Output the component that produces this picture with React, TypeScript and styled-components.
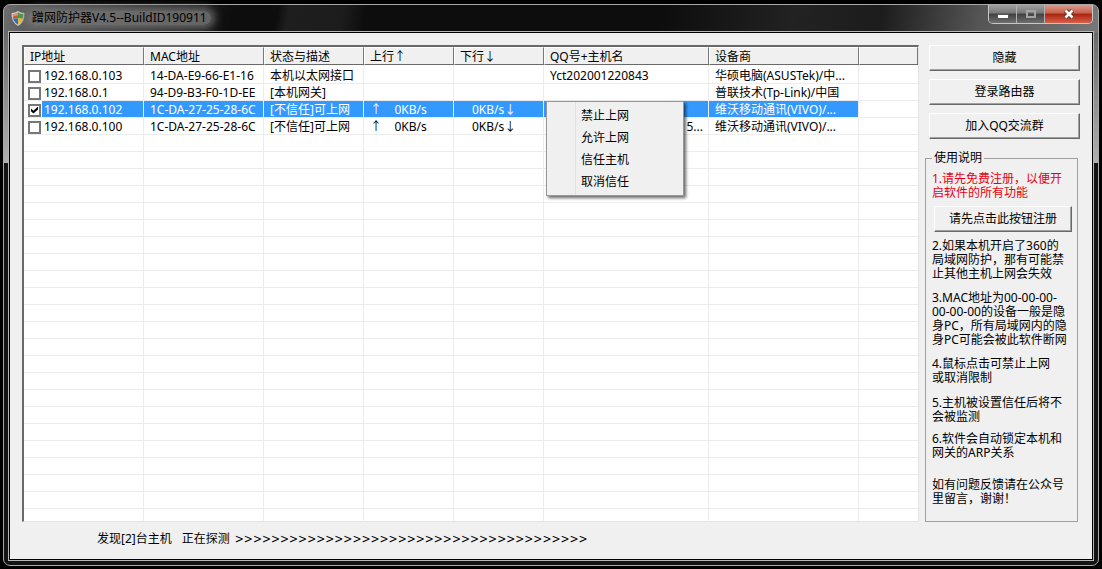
import React from "react";
import styled, { createGlobalStyle, css } from "styled-components";

const GlobalStyle = createGlobalStyle`
  * { box-sizing: border-box; }
  body {
    margin: 0;
    background: #000;
    color: #000;
    font: 12px/14px "Noto Sans", "Noto Sans CJK SC", sans-serif;
  }
  button, input { font: inherit; color: inherit; }
`;

const Frame = styled.main`
  display: flex;
  flex-direction: column;
  min-height: calc(100vh - 7px);
  margin: 4px 3px 3px;
  padding: 0 5px 5px;
  border: 1px solid #a8a8a8;
  border-radius: 7px;
  background:
    linear-gradient(#6a6a6a, #b0b0b0) 0 28px / 5px 130px no-repeat,
    linear-gradient(#6a6a6a, #b0b0b0) 100% 28px / 5px 130px no-repeat,
    linear-gradient(100deg, #6e6e6e 0, #555 3%, #222 16%, #0d0d0d 21%, #0d0d0d 25%, #1e1e1e 26%, #1c1c1c 31%, #0d0d0d 33%, #0d0d0d 60%, #222 72%, #1c1c1c 80%, #555 89%, #777 100%) 0 0 / 100% 28px no-repeat,
    #141414;
`;

const TitleBar = styled.header`
  display: flex;
  align-items: flex-start;
  height: 27px;
`;

const Title = styled.h1`
  display: flex;
  align-items: center;
  gap: 7px;
  flex: 1;
  height: 26px;
  margin: 0;
  font-size: 12px;
  font-weight: 400;

  svg { margin-left: 2px; }
  span {
    padding: 0 4px;
    margin: 0 -4px;
    border-radius: 8px;
    background: rgba(120, 120, 120, 0.8);
    box-shadow: 0 0 8px 4px rgba(120, 120, 120, 0.8);
  }
`;

const WindowButtons = styled.div`
  display: flex;
  border: 1px solid #c8c8c8;
  border-top: 0;
  border-radius: 0 0 5px 5px;
  overflow: hidden;
`;

const WindowButton = styled.button<{ $close?: boolean }>`
  display: grid;
  place-items: center;
  width: ${(p) => (p.$close ? 47 : 28)}px;
  height: 18px;
  padding: 0;
  border: 0;
  border-right: ${(p) => (p.$close ? "0" : "1px solid #b0b0b0")};
  background: ${(p) =>
    p.$close
      ? "linear-gradient(#dd9a8c, #c8604c 45%, #a82410 50%, #d8604a)"
      : "linear-gradient(#a0a0a0, #787878 45%, #404040 50%, #707070)"};
`;

const Client = styled.div`
  display: flex;
  flex-direction: column;
  flex: 1;
  padding: 12px;
  border: 1px solid #000;
  outline: 1px solid #b8b8b8;
  background: #f0f0f0;
`;

const Content = styled.div`
  display: grid;
  grid-template-columns: minmax(0, 1fr) 155px;
  gap: 6px;
  flex: 1;
`;

const ListView = styled.section`
  position: relative;
  contain: size;
  overflow: hidden;
  border: 1px solid #e3e3e3;
  border-width: 2px 1px 1px 2px;
  border-top-color: #696969;
  border-left-color: #696969;
  background: #fff;
`;

const HostTable = styled.table`
  width: 100%;
  table-layout: fixed;
  border-spacing: 0;
`;

const HeadCell = styled.th`
  height: 18px;
  padding: 2px 5px 0;
  border: 1px solid #fff;
  border-right-color: #777;
  border-bottom-color: #696969;
  background: #f0f0f0;
  font-weight: 400;
  text-align: left;
  white-space: nowrap;
`;

const Row = styled.tr<{ $selected?: boolean }>`
  ${(p) => p.$selected && css`
    color: #fff;
    background: #3399ff;
  `}
`;

const Cell = styled.td<{ $first?: boolean; $right?: boolean }>`
  height: 17px;
  padding: 2px 5px 0 6px;
  border-right: 1px solid #ececec;
  border-bottom: 1px solid #ececec;
  overflow: hidden;
  text-align: ${(p) => (p.$right ? "right" : "left")};
  text-overflow: ellipsis;
  white-space: pre;
  ${(p) => p.$first && css`
    padding: 2px 0 0 4px;
    background: linear-gradient(#fff, #fff) 0 0 / 18px 100% no-repeat;
  `}
  tbody tr:first-child & { height: 19px; padding-top: 4px; }
  &:last-child { background: #fff; border-right: 0; }
`;

const HostLabel = styled.label`
  display: flex;
  align-items: center;
  gap: 3px;
`;

const CheckBox = styled.input`
  appearance: none;
  display: grid;
  place-items: center;
  width: 13px;
  height: 13px;
  margin: 0;
  border: 2px solid #777;
  background: #fff;

  &:checked::before {
    content: "";
    width: 7px;
    height: 7px;
    background: #000;
    clip-path: polygon(0 28%, 35% 60%, 100% 0, 100% 42%, 35% 100%, 0 68%);
  }
`;

const Download = styled.span`
  padding-left: 12px;
`;

const Menu = styled.div`
  position: absolute;
  left: 522px;
  top: 54px;
  display: flex;
  flex-direction: column;
  width: 138px;
  padding: 3px 2px 2px;
  border: 1px solid #979797;
  background: linear-gradient(90deg, transparent 28px, #e2e2e2 28px, #e2e2e2 29px, transparent 29px), #f0f0f0;
  box-shadow: 2px 2px 3px rgba(0, 0, 0, 0.6);
`;

const MenuItem = styled.button`
  height: 22px;
  padding: 0 0 0 32px;
  border: 0;
  background: none;
  text-align: left;
`;

const Sidebar = styled.aside`
  display: flex;
  flex-direction: column;
`;

const PushButton = styled.button`
  height: 26px;
  padding: 0;
  border: 1px solid #fff;
  border-right-color: #696969;
  border-bottom-color: #696969;
  box-shadow: inset -1px -1px #a0a0a0;
  background: #f0f0f0;
`;

const Actions = styled.div`
  display: grid;
  gap: 8px;
  padding: 0 0 0 4px;
`;

const Help = styled.fieldset`
  display: flex;
  flex-direction: column;
  flex: 1;
  min-width: 0;
  margin: 12px 2px 0 0;
  padding: 7px 5px 6px 6px;
  border: 1px solid #a0a0a0;
  white-space: nowrap;

  legend { padding: 0 2px; }
  ${PushButton} { margin: 6px 0 0 2px; }
`;

const Note = styled.p<{ $red?: boolean; $gap?: number }>`
  margin: ${(p) => p.$gap ?? 0}px 0 0;
  color: ${(p) => (p.$red ? "#e60012" : "inherit")};
`;

const Status = styled.footer`
  display: flex;
  gap: 10px;
  padding: 10px 0 1px 75px;
`;

const Progress = styled.span`
  margin-left: -5px;
  font-family: "DejaVu Sans Condensed", "DejaVu Sans", sans-serif;
`;

const hosts = [
  { ip: "192.168.0.103", mac: "14-DA-E9-66-E1-16", state: "本机以太网接口", name: "Yct202001220843", vendor: "华硕电脑(ASUSTek)/中..." },
  { ip: "192.168.0.1", mac: "94-D9-B3-F0-1D-EE", state: "[本机网关]", name: "", vendor: "普联技术(Tp-Link)/中国" },
  { ip: "192.168.0.102", mac: "1C-DA-27-25-28-6C", state: "[不信任]可上网", speed: true, selected: true, name: "", vendor: "维沃移动通讯(VIVO)/..." },
  { ip: "192.168.0.100", mac: "1C-DA-27-25-28-6C", state: "[不信任]可上网", speed: true, name: "5...", nameEnd: true, vendor: "维沃移动通讯(VIVO)/..." },
];
const columns = ["IP地址", "MAC地址", "状态与描述", "上行↑", "下行↓", "QQ号+主机名", "设备商", ""];
const widths = [120, 120, 100, 90, 90, 165, 150];

const ShieldIcon = () => (
  <svg width="14" height="15" viewBox="0 0 14 15" aria-hidden="true">
    <path d="M7 0Q10 2 13.500 2Q14 11 7 15Q0 11 .5 2Q4 2 7 0Z" fill="#c9c9c9" />
    <path d="M7 1.500Q4.500 3 1.800 3.200Q1.700 5.500 2.200 7.500H7Z" fill="#d8552e" />
    <path d="M7 1.500Q9.500 3 12.200 3.200Q12.300 5.500 11.800 7.500H7Z" fill="#4c9c34" />
    <path d="M2.200 7.500Q3.200 11.500 7 13.600V7.500Z" fill="#2f6fc4" />
    <path d="M11.800 7.500Q10.800 11.500 7 13.600V7.500Z" fill="#f0c020" />
    <path d="M2 3.200Q4.500 3 7 1.500V4.500Q4 4 2 6Z" fill="#fff" opacity=".35" />
  </svg>
);

export default function App() {
  return (
    <>
      <GlobalStyle />
      <Frame>
        <TitleBar>
          <Title>
            <ShieldIcon />
            <span>蹭网防护器V4.5--BuildID190911</span>
          </Title>
          <WindowButtons>
            <WindowButton aria-label="最小化">
              <svg width="12" height="12" viewBox="0 0 12 12"><rect x=".5" y="6.500" width="11" height="4" fill="#fff" stroke="#555" /></svg>
            </WindowButton>
            <WindowButton aria-label="最大化">
              <svg width="12" height="12" viewBox="0 0 12 12"><rect x="2" y="3" width="8" height="6" fill="none" stroke="#a4a4a4" strokeWidth="2" /></svg>
            </WindowButton>
            <WindowButton $close aria-label="关闭">
              <svg width="14" height="12" viewBox="0 0 14 12">
                <path d="M3.500 2.500 10.500 9.500M10.500 2.500 3.500 9.500" stroke="#5a2a22" strokeWidth="4.500" />
                <path d="M3.500 2.500 10.500 9.500M10.500 2.500 3.500 9.500" stroke="#fff" strokeWidth="2.600" />
              </svg>
            </WindowButton>
          </WindowButtons>
        </TitleBar>
        <Client>
          <Content>
            <ListView>
              <HostTable>
                <colgroup>{widths.map((w, i) => <col key={i} width={w} />)}<col /></colgroup>
                <thead><tr>{columns.map((c) => <HeadCell key={c}>{c}</HeadCell>)}</tr></thead>
                <tbody>
                  {hosts.map((h) => (
                    <Row key={h.ip} $selected={h.selected}>
                      <Cell $first><HostLabel><CheckBox type="checkbox" defaultChecked={h.selected} />{h.ip}</HostLabel></Cell>
                      <Cell>{h.mac}</Cell>
                      <Cell>{h.state}</Cell>
                      <Cell>{h.speed && "↑    0KB/s"}</Cell>
                      <Cell>{h.speed && <Download>0KB/s↓</Download>}</Cell>
                      <Cell $right={h.nameEnd}>{h.name}</Cell>
                      <Cell>{h.vendor}</Cell>
                      <Cell />
                    </Row>
                  ))}
                  {Array.from({ length: 23 }, (_, r) => (
                    <Row key={r}>{columns.map((c) => <Cell key={c} />)}</Row>
                  ))}
                </tbody>
              </HostTable>
              <Menu>
                {["禁止上网", "允许上网", "信任主机", "取消信任"].map((t) => <MenuItem key={t}>{t}</MenuItem>)}
              </Menu>
            </ListView>
            <Sidebar>
              <Actions>
                <PushButton>隐藏</PushButton>
                <PushButton>登录路由器</PushButton>
                <PushButton>加入QQ交流群</PushButton>
              </Actions>
              <Help>
                <legend>使用说明</legend>
                <Note $red>1.请先免费注册，以便开<br />启软件的所有功能</Note>
                <PushButton>请先点击此按钮注册</PushButton>
                <Note $gap={7}>2.如果本机开启了360的<br />局域网防护，那有可能禁<br />止其他主机上网会失效</Note>
                <Note $gap={10}>3.MAC地址为00-00-00-<br />00-00-00的设备一般是隐<br />身PC，所有局域网内的隐<br />身PC可能会被此软件断网</Note>
                <Note $gap={10}>4.鼠标点击可禁止上网<br />或取消限制</Note>
                <Note $gap={11}>5.主机被设置信任后将不<br />会被监测</Note>
                <Note $gap={8}>6.软件会自动锁定本机和<br />网关的ARP关系</Note>
                <Note $gap={18}>如有问题反馈请在公众号<br />里留言，谢谢！</Note>
              </Help>
            </Sidebar>
          </Content>
          <Status>
            <span>发现[2]台主机</span>
            <span>正在探测</span>
            <Progress>{">".repeat(39)}</Progress>
          </Status>
        </Client>
      </Frame>
    </>
  );
}
